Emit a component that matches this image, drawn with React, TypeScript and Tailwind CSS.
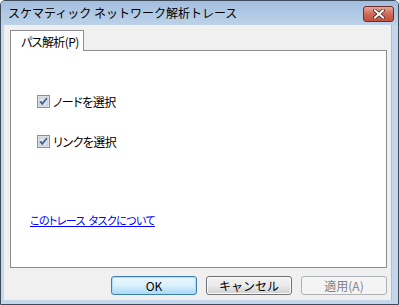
import React from 'react'

const jp = "[font-family:'Noto_Sans_CJK_JP','Liberation_Sans',sans-serif]"

function CheckBox() {
  return (
    <svg width="13" height="13" viewBox="0 0 13 13" className="shrink-0">
      <rect x="0.5" y="0.5" width="12" height="12" fill="#f4f4f4" stroke="#8e8f8f" />
      <rect x="2" y="2" width="9" height="9" fill="#dfe3e8" stroke="#aeb3b9" strokeWidth="0.6" />
      <path d="M3.2 6.4 L5.3 8.9 L9.8 3.3" fill="none" stroke="#3f5f99" strokeWidth="1.8" />
    </svg>
  )
}

function CheckRow({ label }: { label: string }) {
  return (
    <div className="flex items-center gap-[3px] h-[13px]">
      <CheckBox />
      <span className="text-[12px] leading-none text-black tracking-[-0.5px] [font-feature-settings:'palt']">{label}</span>
    </div>
  )
}

export default function App() {
  return (
    <div className={`w-[399px] h-[305px] flex flex-col bg-[#c4d7ec] border border-[#3d4b5a] rounded-t-[5px] overflow-hidden ${jp}`}>
      {/* title bar */}
      <div className="h-[24px] flex items-start justify-between bg-gradient-to-b from-[#a3bedd] to-[#bcd2ea] pl-[7px] pr-[4px]">
        <span className="mt-[4px] text-[12px] leading-[16px] text-black">スケマティック ネットワーク解析トレース</span>
        <button className="mt-[5px] w-[31px] h-[16px] rounded-[3px] border border-[#6e2d2a] bg-gradient-to-b from-[#e5a898] via-[#cf6a58] to-[#c2503c] flex items-center justify-center">
          <svg width="12" height="10" viewBox="0 0 12 10">
            <path d="M2 1.5 L10 8.5 M10 1.5 L2 8.5" stroke="#4d2420" strokeWidth="3.6" strokeLinecap="square" />
            <path d="M2 1.5 L10 8.5 M10 1.5 L2 8.5" stroke="#ffffff" strokeWidth="2" strokeLinecap="square" />
          </svg>
        </button>
      </div>

      {/* client area */}
      <div className="flex-1 ml-[3px] mr-[6px] mb-[4px] bg-[#f0f0f0] border-r border-[#a9bdd3] pt-[5px] pl-[6px] pr-[4px] flex flex-col">
        <div className="flex">
          <div className="relative z-10 w-[74px] h-[21px] bg-white border border-b-0 border-[#898c95] pl-[10px] pt-[3px] text-[12px] leading-[16px] text-black whitespace-nowrap tracking-[-0.6px] -mb-px [font-feature-settings:'palt']">
            パス解析(P)
          </div>
        </div>
        <div className="h-[218px] w-[377px] bg-white border border-[#898c95] pl-[26px] pt-[44px] flex flex-col">
          <CheckRow label="ノードを選択" />
          <div className="mt-[27px]">
            <CheckRow label="リンクを選択" />
          </div>
          <a className="mt-[64px] -ml-[7px] text-[11px] leading-[16px] text-[#0000ff] underline tracking-[-0.6px] whitespace-pre [font-feature-settings:'palt']">
            {'このトレース  タスクについて'}
          </a>
        </div>

        <div className="mt-[8px] flex justify-end gap-[9px]">
          <button className="w-[86px] h-[19px] rounded-[3px] border border-[#3c7fb1] bg-gradient-to-b from-[#eaf6fd] via-[#d9f0fc] to-[#a7d9f5] text-[12px] leading-none text-black shadow-[inset_0_0_0_1px_#a8def7]">
            OK
          </button>
          <button className="w-[86px] h-[19px] rounded-[3px] border border-[#707070] bg-gradient-to-b from-[#f2f2f2] via-[#ebebeb] to-[#cfcfcf] text-[12px] leading-none text-black shadow-[inset_0_0_0_1px_#fcfcfc]">
            キャンセル
          </button>
          <button className="w-[86px] h-[19px] rounded-[3px] border border-[#adb2b5] bg-[#f4f4f4] text-[12px] leading-none text-[#838383]">
            適用(A)
          </button>
        </div>
      </div>
    </div>
  )
}
